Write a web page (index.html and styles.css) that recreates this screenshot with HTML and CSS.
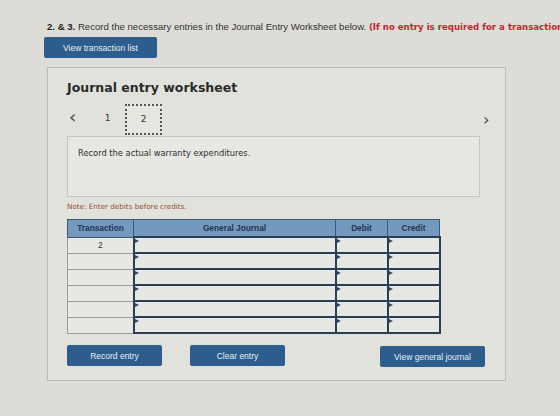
FILE: index.html
```html
<!DOCTYPE html>
<html lang="en">
<head>
    <meta charset="UTF-8">
    <title>Journal Entry Worksheet</title>
    <link rel="stylesheet" href="styles.css">
</head>
<body>

    <p class="prompt"><b>2. &amp; 3.</b> Record the necessary entries in the Journal Entry Worksheet below. <span class="warn">(If no entry is required for a transaction/event, select "No journal entry required" in the first account field.)</span></p>

    <button class="btn btn-list">View transaction list</button>

    <div class="panel">
        <h2 class="title">Journal entry worksheet</h2>

        <!-- step tabs -->
        <div class="steps">
            <span class="chev">&lsaquo;</span>
            <span class="step">1</span>
            <span class="step current">2</span>
            <span class="chev chev-right">&rsaquo;</span>
        </div>

        <div class="desc">Record the actual warranty expenditures.</div>

        <p class="note">Note: Enter debits before credits.</p>

        <table class="entries">
            <thead>
                <tr>
                    <th class="col-tr">Transaction</th>
                    <th class="col-gj">General Journal</th>
                    <th class="col-num">Debit</th>
                    <th class="col-num">Credit</th>
                </tr>
            </thead>
            <tbody>
                <tr><td class="tr">2</td><td class="in"></td><td class="in"></td><td class="in"></td></tr>
                <tr><td class="tr"></td><td class="in"></td><td class="in"></td><td class="in"></td></tr>
                <tr><td class="tr"></td><td class="in"></td><td class="in"></td><td class="in"></td></tr>
                <tr><td class="tr"></td><td class="in"></td><td class="in"></td><td class="in"></td></tr>
                <tr><td class="tr"></td><td class="in"></td><td class="in"></td><td class="in"></td></tr>
                <tr><td class="tr"></td><td class="in"></td><td class="in"></td><td class="in"></td></tr>
            </tbody>
        </table>

        <div class="actions">
            <button class="btn btn-record">Record entry</button>
            <button class="btn btn-clear">Clear entry</button>
            <button class="btn btn-view">View general journal</button>
        </div>
    </div>

</body>
</html>
```

FILE: styles.css
```css
html, body {
    margin: 0;
    padding: 0;
    height: 100%;
    overflow: hidden;
}
body {
    background-color: #dddcd6;
    font-family: "Liberation Sans", Arial, sans-serif;
    color: #2b2b2b;
}

/* question line at the top */
.prompt {
    margin: 21px 0 0 47px;
    font-size: 9.6px;
    line-height: 12px;
    white-space: nowrap;
    color: #333;
}
.prompt b {
    color: #222;
}
.warn {
    color: #c0282d;
    font-weight: bold;
    font-family: "DejaVu Sans", Verdana, sans-serif;
    font-size: 8.6px;
}

/* blue buttons */
.btn {
    display: block;
    border: none;
    border-radius: 2px;
    background-color: #2d5d8c;
    color: #e8eef4;
    font-family: "Liberation Sans", Arial, sans-serif;
    font-size: 8.5px;
    padding: 0;
    height: 21px;
}
.btn-list {
    margin: 4px 0 0 44px;
    width: 113px;
}

/* worksheet panel */
.panel {
    margin: 9px 0 0 47px;
    width: 459px;
    height: 314px;
    border: 1px solid #bdbdb6;
    background-color: #e2e2dc;
    box-sizing: border-box;
    padding: 0 18px 0 19px;
}
.title {
    margin: 12px 0 0 0;
    font-family: "DejaVu Sans", Verdana, sans-serif;
    font-size: 12.5px;
    line-height: 16px;
    color: #2a2a2a;
}

/* step tabs */
.steps {
    display: flex;
    align-items: center;
    height: 31px;
    margin-top: 8px;
    font-family: "DejaVu Sans", Verdana, sans-serif;
    font-size: 9px;
    color: #333;
}
.chev {
    font-size: 18px;
    line-height: 18px;
    color: #444;
    width: 14px;
    margin-left: 2px;
    padding-bottom: 5px;
}
.step {
    width: 37px;
    height: 31px;
    display: flex;
    align-items: center;
    justify-content: center;
    box-sizing: border-box;
    padding-bottom: 3px;
}
.steps .step:nth-child(2) {
    margin-left: 7px;
    width: 35px;
}
.step.current {
    border: 2px dotted #55564f;
    background-color: #e6e6e1;
    padding-bottom: 1px;
}
.chev-right {
    margin-left: auto;
    margin-right: -10px;
    font-size: 16px;
    padding-bottom: 0;
    padding-top: 0;
}

.desc {
    width: 413px;
    height: 61px;
    margin-top: 1px;
    box-sizing: border-box;
    border: 1px solid #c6c6c0;
    background-color: #e7e7e3;
    padding: 11px 0 0 10px;
    font-family: "DejaVu Sans", Verdana, sans-serif;
    font-size: 8.3px;
    color: #2e2e2e;
}

.note {
    margin: 5px 0 0 0;
    font-family: "DejaVu Sans", Verdana, sans-serif;
    font-size: 7.2px;
    line-height: 10px;
    color: #9a4a34;
}

/* journal table */
.entries {
    margin-top: 7px;
    width: 373px;
    border-collapse: collapse;
    table-layout: fixed;
}
.entries th {
    height: 16px;
    padding: 0;
    background-color: #7399be;
    color: #1f3550;
    font-size: 8.3px;
    font-weight: bold;
    border: 1px solid #40586e;
}
.col-tr { width: 65px; }
.col-gj { width: 201px; }
.col-num { width: 51px; }

.entries td {
    height: 14px;
    padding: 0;
    background-color: #e8e8e3;
}
td.tr {
    border: 1px solid #9a9a94;
    text-align: center;
    font-size: 8.5px;
    color: #333;
}
td.in {
    border: 2px solid #283f57;
    position: relative;
}
/* small dropdown marker in the corner of each input */
td.in::before {
    content: "";
    position: absolute;
    left: 0;
    top: 1px;
    border-left: 4px solid #2c4a66;
    border-top: 2px solid transparent;
    border-bottom: 2px solid transparent;
}

.actions {
    display: flex;
    margin-top: 11px;
}
.btn-record,
.btn-clear {
    width: 95px;
}
.btn-clear {
    margin-left: 28px;
}
.btn-view {
    width: 105px;
    margin-left: auto;
    margin-top: 1px;
    margin-right: 2px;
}
```
